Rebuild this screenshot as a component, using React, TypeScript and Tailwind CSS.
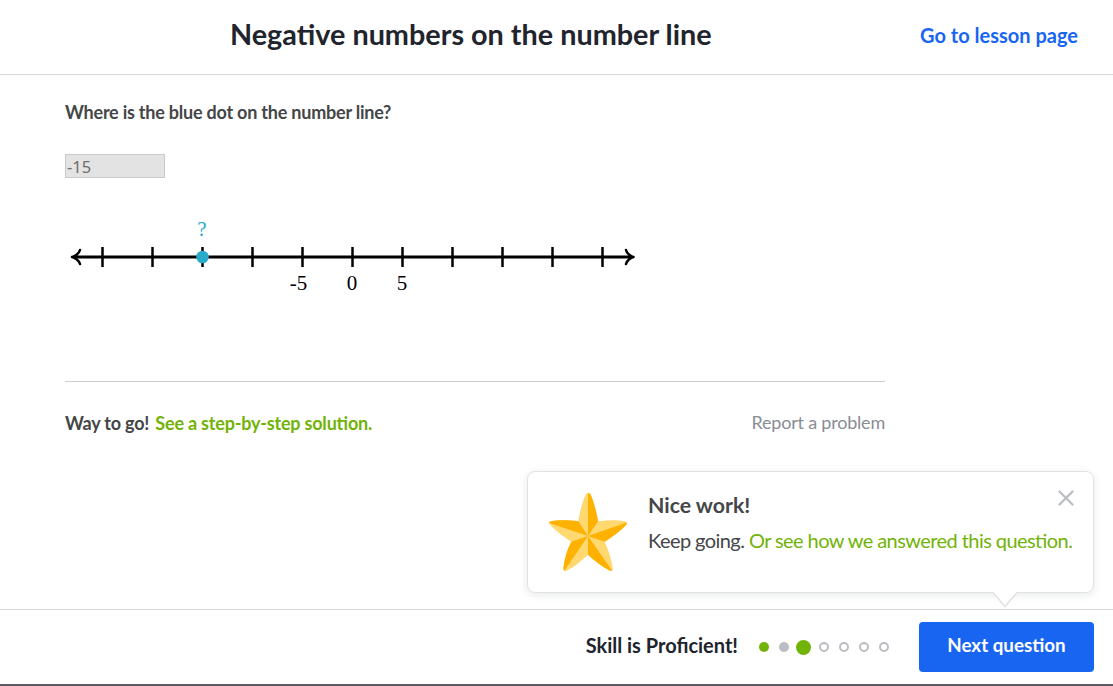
import React from 'react';

const TICKS = [-25, -20, -15, -10, -5, 0, 5, 10, 15, 20, 25];
const LABELS = [-5, 0, 5];
const DOTS = ['correct', 'skipped', 'current', 'empty', 'empty', 'empty', 'empty'];

const toX = (value: number) => 287.5 + value * 10;

const NumberLine: React.FC = () => (
  <svg width='580' height='90' viewBox='0 0 580 90' fill='none' className='block'>
    <path d='M8 42H567' stroke='#000' strokeWidth='3' />
    <g stroke='#000' strokeWidth='2.5' strokeLinecap='round' strokeLinejoin='round'>
      <path d='M15 35C14 39 9.5 41.5 7 42C9.5 42.5 14 45 15 49' />
      <path d='M561 35C562 39 566 41.5 568.5 42C566 42.5 562 45 561 49' />
    </g>
    {TICKS.map((tick) => (
      <path key={tick} d={`M${toX(tick)} 32V52`} stroke='#000' strokeWidth='2.5' />
    ))}
    <circle cx='137.5' cy='42' r='6.3' fill='#29abca' />
    <g fontFamily='"Liberation Serif", serif' fontSize='21' textAnchor='middle'>
      <text x='137' y='21' fill='#29abca'>
        ?
      </text>
      {LABELS.map((label) => (
        <text key={label} x={label < 0 ? 233.5 : toX(label) - 0.5} y='75' fill='#000'>
          {label}
        </text>
      ))}
    </g>
  </svg>
);

const Star: React.FC = () => (
  <svg width='78' height='79' viewBox='0 0 78 79' className='block shrink-0'>
    <path
      fill='#ffd970'
      d='M39.2 0C37.6 0 36.8 1.2 36 3C33 10 30.5 20 29.3 28.3C20 27 9 27 3 28C0 28.5 -.6 30 .8 31.5C6 37 14 43.5 22.3 48.7C18.5 56 15.5 65 14.5 74C14.2 77.5 15.5 79 18 77.5C26 73.5 33 67.5 39 61.7C45.5 67.8 53 73.5 60.5 77.5C63 79 64.2 77.5 63.6 74C62 64.5 59 56 55.7 48.7C64 43.5 72 37.5 77 32C78.8 30 78 28.5 75 28C67 27 57.5 27.2 49 28.3C47.5 19 45 9.5 42.2 3C41.5 1.2 40.8 0 39.2 0Z'
    />
    <g fill='#ffb100'>
      <path d='M39 43V0C40.8 0 41.5 1.2 42.2 3C45 9.5 47.5 19 49 28.3Z' />
      <path d='M39 43L77.7 29.5C78 30.2 77.7 31.2 77 32C72 37.5 64 43.5 55.7 48.7Z' />
      <path d='M39 43L63 77.6C62.5 78.2 61.5 78 60.5 77.5C53 73.5 45.5 67.8 39 61.7Z' />
      <path d='M39 43L15.3 77.9C14.5 77.3 14.3 76 14.5 74C15.5 65 18.5 56 22.3 48.7Z' />
      <path d='M39 43L.2 30C.2 29 1 28.3 3 28C9 27 20 27 29.3 28.3Z' />
    </g>
  </svg>
);

const ProgressDots: React.FC = () => (
  <div className='flex w-[130px] items-center gap-[10px]'>
    {DOTS.map((dot, i) => {
      if (dot === 'current') {
        return <span key={i} className='-mr-[2px] -ml-[3px] size-[15px] rounded-full bg-[#71b307]' />;
      }
      if (dot === 'correct') {
        return <span key={i} className='size-[10px] rounded-full bg-[#71b307]' />;
      }
      if (dot === 'skipped') {
        return <span key={i} className='size-[10px] rounded-full bg-[#babec2]' />;
      }
      return <span key={i} className='size-[10px] rounded-full border-2 border-[#babec2]' />;
    })}
  </div>
);

const App: React.FC = () => {
  return (
    <div className='relative flex h-[686px] w-[1113px] flex-col overflow-hidden bg-white font-["Lato",sans-serif] text-[#444648]'>
      <header className='flex h-[75px] shrink-0 items-start justify-between border-b border-[#d6d8da] pr-[35px] pl-[230px]'>
        <h1 className='pt-4 text-[28.8px] leading-9 font-bold whitespace-nowrap text-[#21242c]'>
          Negative numbers on the number line
        </h1>
        <a className='pt-[23px] text-[20px] leading-6 font-bold whitespace-nowrap text-[#1865f2]'>
          Go to lesson page
        </a>
      </header>

      <main className='ml-[65px] flex w-[820px] flex-1 flex-col'>
        <p className='mt-[26px] text-[18px] leading-[22px] font-bold tracking-[-0.22px]'>
          Where is the blue dot on the number line?
        </p>
        <div className='mt-[31px] h-6 w-[100px] border border-[#c9c9c9] bg-[#e3e3e3] pl-px font-["Noto_Sans",sans-serif] text-[16.5px] leading-6 text-[#6e6e6e]'>
          -15
        </div>
        <div className='mt-[37px]'>
          <NumberLine />
        </div>
        <div className='mt-[76px] flex items-start justify-between border-t border-[#cfcfcf] pt-[30px] text-[18px] leading-[22px]'>
          <p className='font-bold tracking-[-0.2px] whitespace-nowrap [font-feature-settings:"liga"_1]'>
            Way to go! <a className='ml-[2px] text-[#71b307]'>See a step-by-step solution.</a>
          </p>
          <a className='-mt-px tracking-[-0.21px] whitespace-nowrap text-[#888d93]'>Report a problem</a>
        </div>
      </main>

      {/* feedback popover above the next button */}
      <div className='absolute top-[471px] left-[527px] flex h-[122px] w-[567px] rounded-lg border border-[#e1e2e4] bg-white pt-[21px] pl-[21px] shadow-[0_2px_8px_rgba(33,36,44,0.1)]'>
        <Star />
        <div className='-mt-px ml-[21px] whitespace-nowrap'>
          <h2 className='text-[21.3px] leading-[26px] font-bold'>Nice work!</h2>
          <p className='mt-2 text-[20px] leading-7 tracking-[-0.57px] [font-feature-settings:"liga"_1]'>
            Keep going. <a className='text-[#71b307]'>Or see how we answered this question.</a>
          </p>
        </div>
        <svg width='16' height='16' viewBox='0 0 16 16' className='absolute top-[18px] right-[19px]'>
          <path d='M1.5 1.5L14.5 14.5M14.5 1.5L1.5 14.5' stroke='#babec2' strokeWidth='2.3' strokeLinecap='round' />
        </svg>
        <svg width='26' height='16' viewBox='0 0 26 16' className='absolute top-[120px] left-[464px]'>
          <path d='M1 0L13 14.5L25 0Z' fill='#fff' />
          <path d='M1 .5L13 14.5L25 .5' fill='none' stroke='#e1e2e4' strokeWidth='1.5' />
        </svg>
      </div>

      <footer className='flex h-[77px] shrink-0 items-center justify-end border-t border-b-2 border-t-[#d6d8da] border-b-[#5c5962] pr-[19px]'>
        <span className='-mt-[4px] mr-[21px] text-[20px] leading-6 font-bold whitespace-nowrap text-[#21242c]'>
          Skill is Proficient!
        </span>
        <ProgressDots />
        <button className='ml-[30px] h-[50px] w-[175px] rounded bg-[#1865f2] pb-1 text-[18.8px] leading-6 font-bold text-white'>
          Next question
        </button>
      </footer>
    </div>
  );
};

export default App;
